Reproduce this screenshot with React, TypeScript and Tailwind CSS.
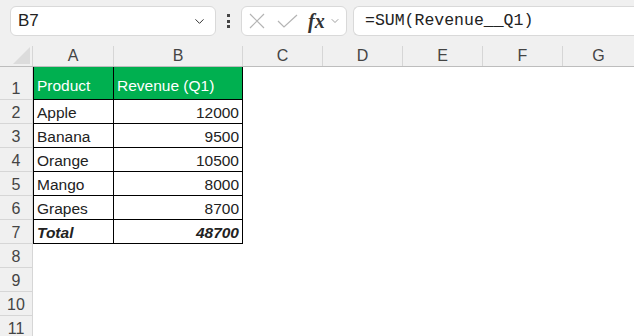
import { ChevronDown } from 'lucide-react'

const rows = [
  { n: 1, a: 'Product', b: 'Revenue (Q1)', head: true },
  { n: 2, a: 'Apple', b: '12000' },
  { n: 3, a: 'Banana', b: '9500' },
  { n: 4, a: 'Orange', b: '10500' },
  { n: 5, a: 'Mango', b: '8000' },
  { n: 6, a: 'Grapes', b: '8700' },
  { n: 7, a: 'Total', b: '48700', total: true },
]

const cols = [
  { l: 'A', w: 'w-[81px]' },
  { l: 'B', w: 'w-[129px]' },
  { l: 'C', w: 'w-[80px]' },
  { l: 'D', w: 'w-[80px]' },
  { l: 'E', w: 'w-[80px]' },
  { l: 'F', w: 'w-[80px]' },
]

export default function App() {
  return (
    <div className="w-[634px] h-[336px] overflow-hidden bg-white text-[#222] font-['Liberation_Sans',Arial,sans-serif]">
      {/* Barra de fórmulas */}
      <div className="h-[46px] bg-[#f0f0f0] flex items-start pt-[6px]">
        <div className="ml-[10px] w-[206px] h-[30px] bg-white border border-[#d9d9d9] rounded-[6px] flex items-center justify-between pl-[7px] pr-[8px]">
          <span className="text-[17px] text-[#222]">B7</span>
          <ChevronDown size={15} strokeWidth={1.6} className="text-[#333]" />
        </div>
        <div className="w-[25px] h-[30px] flex flex-col items-center justify-center gap-[2.5px]">
          <span className="w-[3px] h-[3px] bg-[#444]" />
          <span className="w-[3px] h-[3px] bg-[#444]" />
          <span className="w-[3px] h-[3px] bg-[#444]" />
        </div>
        <div className="w-[106px] h-[30px] bg-white border border-[#d9d9d9] rounded-[6px] flex items-center pl-[7px]">
          <svg width="16" height="16" viewBox="0 0 16 16" className="text-[#b4b4b4]">
            <path d="M1 1 L15 15 M15 1 L1 15" stroke="currentColor" strokeWidth="1.2" fill="none" />
          </svg>
          <svg width="21" height="14" viewBox="0 0 21 14" className="ml-[12px] text-[#b4b4b4]">
            <path d="M1 7 L7 13 L20 1" stroke="currentColor" strokeWidth="1.2" fill="none" />
          </svg>
          <span className="ml-[10px] font-['Liberation_Serif',serif] italic font-bold text-[20px] leading-none text-[#333]">fx</span>
          <ChevronDown size={12} strokeWidth={1.4} className="ml-[4px] text-[#777]" />
        </div>
        <div className="ml-[6px] flex-1 h-[30px] bg-white border border-[#d9d9d9] border-r-0 rounded-l-[6px] flex items-center pl-[11px]">
          <span className="font-['Liberation_Mono',monospace] text-[16.5px] text-[#222]">=SUM(Revenue__Q1)</span>
        </div>
      </div>

      {/* Cabeçalho das colunas */}
      <div className="h-[21px] flex bg-[#f0f0f0] border-b border-[#bdbdbd] text-[16px] text-[#444]">
        <div className="w-[33px] border-r border-[#d6d6d6] flex items-end justify-end pr-[2px] pb-[2px]">
          <svg width="17" height="17" viewBox="0 0 17 17">
            <path d="M17 0 L17 17 L0 17 Z" fill="#dcdcdc" />
          </svg>
        </div>
        {cols.map(c => (
          <div key={c.l} className={`${c.w} border-r border-[#d6d6d6] flex items-center justify-center`}>
            {c.l}
          </div>
        ))}
        <div className="flex-1 flex items-center justify-center">G</div>
      </div>

      {/* Linhas */}
      <div className="flex flex-col text-[15.5px]">
        {rows.map(r => (
          <div key={r.n} className={`flex ${r.head ? 'h-[33px]' : 'h-[24px]'}`}>
            <div className="w-[33px] bg-[#f0f0f0] border-r border-b border-[#d6d6d6] flex items-end justify-center pb-[1px] text-[16px] text-[#444] leading-[18px]">
              {r.n}
            </div>
            <div
              className={`w-[81px] border-l border-r border-b border-black flex px-[3px] leading-[17px] ${
                r.head ? 'bg-[#00b050] text-white items-center pt-[4px]' : 'items-end pb-[2px]'
              } ${r.total ? 'font-bold italic' : ''}`}
            >
              {r.a}
            </div>
            <div
              className={`w-[129px] border-r border-b border-black flex px-[3px] leading-[17px] ${
                r.head ? 'bg-[#00b050] text-white items-center pt-[4px]' : 'items-end justify-end pb-[2px]'
              } ${r.total ? 'font-bold italic' : ''}`}
            >
              {r.b}
            </div>
          </div>
        ))}
        {[8, 9, 10, 11].map(n => (
          <div key={n} className="flex h-[24px]">
            <div className="w-[33px] bg-[#f0f0f0] border-r border-b border-[#d6d6d6] flex items-end justify-center pb-[1px] text-[16px] text-[#444] leading-[18px]">
              {n}
            </div>
          </div>
        ))}
      </div>
    </div>
  )
}
